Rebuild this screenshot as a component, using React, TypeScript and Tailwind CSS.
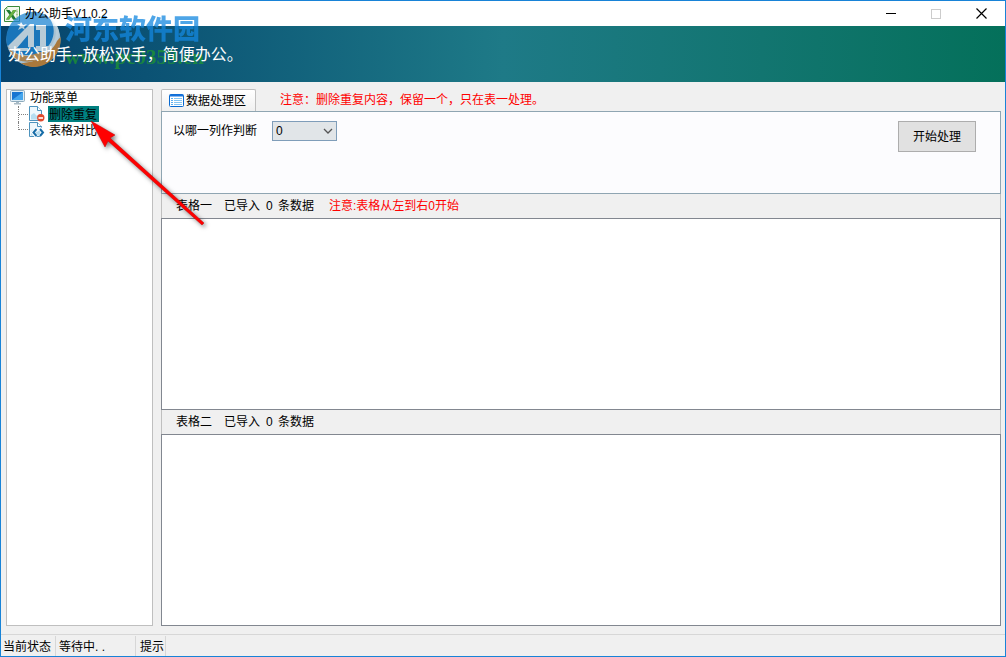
import type { ReactNode } from "react";

function ExcelIcon() {
  return (
    <svg width="16" height="16" viewBox="0 0 16 16" aria-hidden="true">
      <path d="M.5 3.5 L3.5 .5 H15.5 V15.5 H.5 Z" fill="#f2f8ee" stroke="#3b8a3c" />
      <path d="M1 3.5 L3.5 1 V3.5 Z" fill="#8fc27e" />
      <path d="M13 3 V14 M9 13.5 H14 M12 5.5 H14 M12 8.5 H14" stroke="#a9cf96" />
      <path d="M2 4 H5.5 L7.5 6.8 L9 4 H12.5 L9.2 8.7 L12.5 13.5 H9 L7 10.6 L5.2 13.5 H2 L5.5 8.7 Z" fill="#207a32" />
      <path d="M9.2 4 H12.4 L5.2 13.5 H2 Z" fill="#6bb343" />
    </svg>
  );
}

function MonitorIcon() {
  return (
    <svg width="16" height="16" viewBox="0 0 16 16" aria-hidden="true">
      <rect x=".5" y=".5" width="14" height="11" rx="1" fill="#dcebf4" stroke="#8fabbc" />
      <rect x="2" y="2" width="11" height="8" fill="#1675d1" />
      <path d="M2 10 L13 2 V10 Z" fill="#43a5ed" />
      <path d="M6 12 H9 V13 H11 V14.5 H4 V13 H6 Z" fill="#a9bbc6" />
    </svg>
  );
}

function PageShape() {
  return (
    <>
      <path d="M1.5 .5 H9.5 L13.5 4.5 V14.5 H1.5 Z" fill="#eef7fc" stroke="#4d93bd" />
      <path d="M9.5 .5 V4.5 H13.5" fill="#fff" stroke="#4d93bd" />
      <path d="M3 9 L6 7 L9 10 L12 8 V13.5 H3 Z" fill="#b6ddf0" />
    </>
  );
}

function PageRemoveIcon() {
  return (
    <svg width="17" height="16" viewBox="0 0 17 16" aria-hidden="true">
      <PageShape />
      <circle cx="12.8" cy="11.8" r="3.7" fill="#df4a2c" />
      <path d="M10.5 12 H15" stroke="#fff" strokeWidth="1.6" />
    </svg>
  );
}

function PageCodeIcon() {
  return (
    <svg width="17" height="16" viewBox="0 0 17 16" aria-hidden="true">
      <PageShape />
      <path d="M8.5 6.5 L5 10.5 L8.5 14.5 M12 6.5 L15.5 10.5 L12 14.5" fill="none" stroke="#fff" strokeWidth="3.5" />
      <path d="M8.5 7 L5.5 10.5 L8.5 14 M12 7 L15 10.5 L12 14" fill="none" stroke="#176da8" strokeWidth="2" />
    </svg>
  );
}

function ListIcon() {
  return (
    <svg width="15" height="13" viewBox="0 0 15 13" aria-hidden="true">
      <rect x=".5" y=".5" width="14" height="12" rx="1" fill="#fff" stroke="#0869d0" />
      <path d="M1 1.5 H14" stroke="#1673dc" strokeWidth="2" />
      <path d="M2 4.5 H4 M2 6.5 H4 M2 8.5 H4 M2 10.5 H4" stroke="#5aaef0" />
      <path d="M5 4.5 H13 M5 6.5 H13 M5 8.5 H13 M5 10.5 H13" stroke="#83c5f3" />
    </svg>
  );
}

function TitleBar() {
  return (
    <header className="flex h-[25px] shrink-0 items-center bg-white pl-[3px]">
      <ExcelIcon />
      <h1 className="relative z-10 ml-[5px] flex-1 text-[12px]">办公助手V1.0.2</h1>
      <button aria-label="最小化" className="flex h-full w-[45px] items-center justify-center">
        <svg width="10" height="10"><path d="M0 4.500 H10" stroke="#000" /></svg>
      </button>
      <button aria-label="最大化" disabled className="flex h-full w-[45px] items-center justify-center">
        <svg width="10" height="10"><rect x=".5" y=".5" width="9" height="9" fill="none" stroke="#ccc" /></svg>
      </button>
      <button aria-label="关闭" className="flex h-full w-[47px] items-center justify-center">
        <svg width="11" height="11"><path d="M.5 .5 L10.5 10.5 M10.5 .5 L.5 10.5" stroke="#000" strokeWidth="1.2" /></svg>
      </button>
    </header>
  );
}

function Watermark() {
  return (
    <div className="pointer-events-none absolute top-[9px] left-[3px] flex gap-[3px]">
      <svg width="58" height="58" viewBox="0 0 58 58" className="shrink-0 opacity-75" aria-hidden="true">
        <circle cx="29.500" cy="29.500" r="27" fill="#dceaf2" />
        <path d="M3 35 A27 27 0 0 1 42 5 C50 11 52 22 47 32 C42 41 32 46 22 45 C14 45 7 41 3 35 Z" fill="#1f86d4" />
        <path d="M42 5 C53 12 55 26 47 36 C41 44 31 49 20 48 C36 51 50 42 54 30 C57 19 52 10 42 5 Z" fill="#f2f8fb" />
        <path d="M56.500 27 C58 43 46 56 31 57 C24 57 20 55 17 53 C32 53 47 44 53 31 Z" fill="#df8a2c" />
        <path d="M4 37 C9 43 15 46 24 46 L40 41 L41 46 C34 52 22 53 14 50 C9 47 6 42 4 37 Z" fill="#e09a4b" />
        <path d="M4 36 L26 14 H30 V37 H24 V25 L13 38 H24 V41 H12 C8 41 5 39 4 36 Z" fill="#f2f8fb" />
        <path d="M32 15 H42 V36 H47 L42 41 H32 V36 H36 V20 H32 Z" fill="#f2f8fb" />
        <path d="M17 12 L19 15 L23 14 L20 17 L21 20 L18 18 L14 20 L16 16 L13 14 L16 14 Z" fill="#f2f8fb" />
      </svg>
      <div className="pt-[3px]">
        <div className="text-[27px] leading-[34px] font-black text-[#1488e0] opacity-75">河东软件园</div>
        <div className="font-['Liberation_Serif',serif] text-[21px] leading-5 font-bold text-[#1f9b2c] opacity-70">www.pc0359.cn</div>
      </div>
    </div>
  );
}

function TreeItem({ icon, label, selected, last }: { icon: ReactNode; label: string; selected?: boolean; last?: boolean }) {
  return (
    <li className="flex h-4 items-center pl-[11px]">
      <span className={last ? "h-2 w-[10px] self-start border-b border-l border-dotted border-[#808080]" : "flex h-4 w-[10px] items-center border-l border-dotted border-[#808080]"}>
        {last ? null : <span className="w-full border-t border-dotted border-[#808080]" />}
      </span>
      {icon}
      <button className={selected ? "ml-[3px] h-4 bg-[#008080] pr-[2px] pl-px leading-[18px]" : "ml-[3px] h-4 pr-[2px] pl-px leading-[18px]"}>{label}</button>
    </li>
  );
}

function Arrow() {
  return (
    <svg className="pointer-events-none absolute top-[115px] left-[87px] drop-shadow-[2px_2px_2px_rgba(0,0,0,0.5)]" width="124" height="116" viewBox="0 0 124 116" aria-hidden="true">
      <path d="M3 5 L27 19 L22 22 L116 107 L114 109 L20 25 L17 31 Z" fill="#f00" stroke="#c40000" strokeWidth=".5" />
    </svg>
  );
}

function DataGrid({ name, note }: { name: string; note?: string }) {
  return (
    <section className="flex min-h-0 flex-1 flex-col">
      <div className="flex h-6 shrink-0 items-center border-x border-[#bfbfbf] pl-[14px]">
        <h2 className="w-12">{name}</h2>
        <p className="flex">
          <span className="w-[42px]">已导入</span>
          <span className="w-3">0</span>
          <span>条数据</span>
        </p>
        {note ? <p className="ml-[15px] text-[#f00]">{note}</p> : null}
      </div>
      <div className="flex-1 border border-[#828790] bg-white" />
    </section>
  );
}

export default function App() {
  return (
    <div className="relative flex h-screen flex-col border border-[#1883d7] bg-[#f0f0f0] font-['Liberation_Sans','Noto_Sans_CJK_SC',sans-serif] text-[12px] leading-4 text-black">
      <TitleBar />
      <div className="flex h-14 shrink-0 items-center bg-linear-to-r from-[#06426c] via-[#1e7a87] to-[#04705a] pt-[2px] pl-[7px] text-white">
        <p className="relative z-10 text-[16px] leading-6">办公助手--放松双手，简便办公。</p>
      </div>

      <main className="flex min-h-0 flex-1 gap-2 pt-[7px] pr-1 pb-2 pl-[5px]">
        <nav aria-label="功能菜单" className="w-[147px] shrink-0 border border-[#bfbfbf] bg-white">
          <div className="flex h-4 items-center gap-1 pl-[3px]">
            <MonitorIcon />
            <span className="leading-[18px]">功能菜单</span>
          </div>
          <ul>
            <TreeItem icon={<PageRemoveIcon />} label="删除重复" selected />
            <TreeItem icon={<PageCodeIcon />} label="表格对比" last />
          </ul>
        </nav>

        <div className="flex min-w-0 flex-1 flex-col">
          <div className="flex h-[22px] shrink-0 items-center">
            <button className="flex h-full w-[95px] items-center gap-[2px] rounded-t-[2px] border border-b-0 border-[#bfbfbf] bg-linear-to-b from-white to-[#f0f0f0] pl-[7px]">
              <ListIcon />
              数据处理区
            </button>
            <p className="ml-6 text-[#f00]">注意：删除重复内容，保留一个，只在表一处理。</p>
          </div>
          <div className="flex h-[83px] shrink-0 items-start justify-between border border-[#8fa5b2] bg-[#fcfcfe] pt-[9px] pr-6 pl-[11px]">
            <div className="flex items-center gap-[15px]">
              <label htmlFor="column">以哪一列作判断</label>
              <span className="relative">
                <select id="column" defaultValue="0" className="block h-5 w-[65px] appearance-none border border-[#7f9db9] bg-[#e1e5e8] pl-[3px] leading-4">
                  <option>0</option>
                  <option>1</option>
                  <option>2</option>
                </select>
                <svg className="pointer-events-none absolute top-[7px] right-1" width="10" height="7"><path d="M1 1 L5 5 L9 1" fill="none" stroke="#555" strokeWidth="1.3" /></svg>
              </span>
            </div>
            <button className="h-[31px] w-[78px] border border-[#adadad] bg-[#e1e1e1] pt-px">开始处理</button>
          </div>
          <DataGrid name="表格一" note="注意:表格从左到右0开始" />
          <DataGrid name="表格二" />
        </div>
      </main>

      <footer className="flex h-[22px] shrink-0 border-t border-[#d7d7d7] pt-px">
        <span className="w-[55px] border-r border-[#d7d7d7] pl-[2px] leading-[22px]">当前状态</span>
        <span className="w-20 border-r border-[#d7d7d7] pl-[3px] leading-[22px]">等待中. .</span>
        <span className="w-[30px] border-r border-[#d7d7d7] pl-1 leading-[22px]">提示</span>
      </footer>

      <Watermark />
      <Arrow />
    </div>
  );
}
